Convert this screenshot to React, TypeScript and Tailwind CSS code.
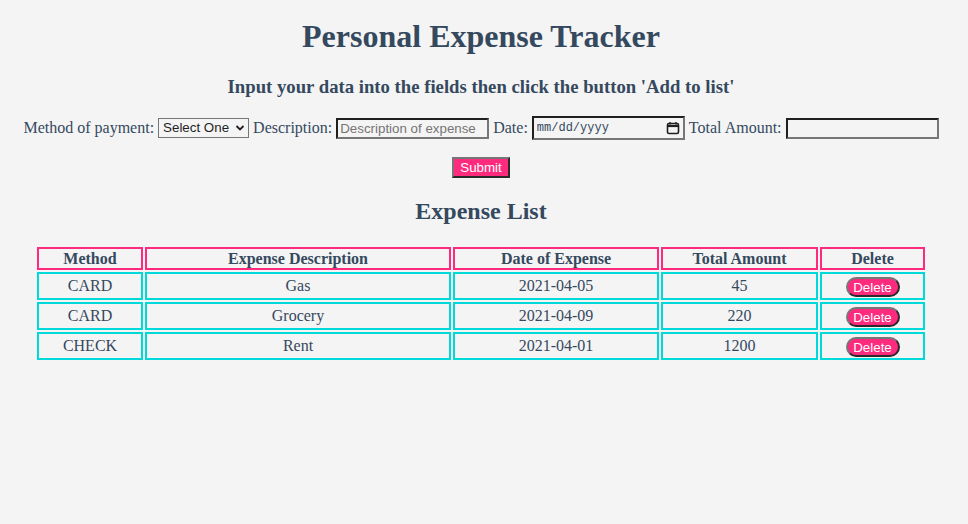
import { useState } from 'react'

interface Expense {
  id: number
  method: string
  description: string
  date: string
  amount: number
}

const initial: Expense[] = [
  { id: 1, method: 'CARD', description: 'Gas', date: '2021-04-05', amount: 45 },
  { id: 2, method: 'CARD', description: 'Grocery', date: '2021-04-09', amount: 220 },
  { id: 3, method: 'CHECK', description: 'Rent', date: '2021-04-01', amount: 1200 },
]

export default function App() {
  const [expenses, setExpenses] = useState<Expense[]>(initial)
  const [method, setMethod] = useState('')
  const [description, setDescription] = useState('')
  const [date, setDate] = useState('')
  const [amount, setAmount] = useState('')

  function handleSubmit(e: React.FormEvent) {
    e.preventDefault()
    if (!method || !description || !date || !amount) return
    setExpenses([
      ...expenses,
      { id: Date.now(), method, description, date, amount: Number(amount) },
    ])
    setDescription('')
    setDate('')
    setAmount('')
  }

  return (
    <div className="min-h-[524px] w-full bg-[#f4f4f4] font-['Liberation_Serif',serif] text-[16px] text-[#34495e]">
      <div className="w-[962px] pt-[18px]">
        {/* Header */}
        <h1 className="text-center text-[32px] font-bold leading-[37px]">
          Personal Expense Tracker
        </h1>
        <h3 className="mt-[21px] text-center text-[18.72px] font-bold leading-[22px]">
          Input your data into the fields then click the button 'Add to list'
        </h3>

        {/* Form */}
        <form onSubmit={handleSubmit} className="mt-[18px]">
          <div className="flex items-center justify-center gap-[4px] leading-[18px]">
            <label htmlFor="method">Method of payment:</label>
            <div className="relative">
              <select
                id="method"
                value={method}
                onChange={(e) => setMethod(e.target.value)}
                className="h-[20px] w-[91px] appearance-none rounded-none border border-[#767676] bg-[#f4f4f4] pl-[4px] font-['Liberation_Sans',sans-serif] text-[13.33px] text-[#1f1f1f] outline-none"
              >
                <option value="">Select One</option>
                <option value="CARD">CARD</option>
                <option value="CHECK">CHECK</option>
                <option value="CASH">CASH</option>
              </select>
              <svg
                className="pointer-events-none absolute right-[4px] top-[6px] h-[8px] w-[10px]"
                viewBox="0 0 10 8"
                fill="none"
                stroke="#1f1f1f"
                strokeWidth={1.8}
              >
                <path d="M1.5 2l3.5 3.5L8.5 2" />
              </svg>
            </div>
            <label htmlFor="description">Description:</label>
            <input
              id="description"
              type="text"
              value={description}
              onChange={(e) => setDescription(e.target.value)}
              placeholder="Description of expense"
              className="h-[21px] w-[153px] border-2 border-t-[#1f1f1f] border-l-[#1f1f1f] border-b-[#767676] border-r-[#767676] bg-[#f4f4f4] px-[2px] font-['Liberation_Sans',sans-serif] text-[13.33px] text-[#1f1f1f] outline-none placeholder:text-[#757575]"
            />
            <label htmlFor="date">Date:</label>
            <div className="flex h-[24px] w-[153px] items-center justify-between border-2 border-t-[#1f1f1f] border-l-[#1f1f1f] border-b-[#767676] border-r-[#767676] bg-[#f4f4f4] pl-[3px] pr-[3px]">
              <input
                id="date"
                type="text"
                value={date}
                onChange={(e) => setDate(e.target.value)}
                placeholder="mm/dd/yyyy"
                className="w-[110px] bg-transparent font-['Liberation_Mono',monospace] text-[12px] text-[#34495e] outline-none placeholder:text-[#34495e]"
              />
              <svg className="h-[14px] w-[14px]" viewBox="0 0 14 14" fill="none" stroke="#1f1f1f">
                <rect x="1.5" y="2.5" width="11" height="10" rx="1.5" strokeWidth={1.6} />
                <path d="M1.5 5h11" strokeWidth={2.2} />
                <path d="M4 1v2.5M10 1v2.5" strokeWidth={1.4} />
              </svg>
            </div>
            <label htmlFor="amount">Total Amount:</label>
            <input
              id="amount"
              type="text"
              value={amount}
              onChange={(e) => setAmount(e.target.value)}
              className="h-[21px] w-[153px] border-2 border-t-[#1f1f1f] border-l-[#1f1f1f] border-b-[#767676] border-r-[#767676] bg-[#f4f4f4] px-[2px] font-['Liberation_Sans',sans-serif] text-[13.33px] outline-none"
            />
          </div>
          <div className="mt-[17px] flex justify-center">
            <button
              type="submit"
              className="h-[21px] w-[58px] border-2 border-t-[#767676] border-l-[#767676] border-b-[#2a2a2a] border-r-[#2a2a2a] bg-[#fe2a7e] font-['Liberation_Sans',sans-serif] text-[13.33px] leading-none text-white"
            >
              Submit
            </button>
          </div>
        </form>

        {/* Expense list */}
        <h2 className="mt-[19px] text-center text-[24px] font-bold leading-[28px]">
          Expense List
        </h2>

        <table className="mx-auto mt-[20px] w-[892px] border-separate border-spacing-[2px] text-center">
          <thead>
            <tr className="h-[23px]">
              <th className="w-[106px] border-2 border-[#fe2a7e] font-bold leading-[19px]">Method</th>
              <th className="w-[306px] border-2 border-[#fe2a7e] font-bold leading-[19px]">Expense Description</th>
              <th className="w-[206px] border-2 border-[#fe2a7e] font-bold leading-[19px]">Date of Expense</th>
              <th className="w-[157px] border-2 border-[#fe2a7e] font-bold leading-[19px]">Total Amount</th>
              <th className="w-[105px] border-2 border-[#fe2a7e] font-bold leading-[19px]">Delete</th>
            </tr>
          </thead>
          <tbody>
            {expenses.map((exp) => (
              <tr key={exp.id} className="h-[27px]">
                <td className="border-2 border-[#00d9d9]">{exp.method}</td>
                <td className="border-2 border-[#00d9d9]">{exp.description}</td>
                <td className="border-2 border-[#00d9d9]">{exp.date}</td>
                <td className="border-2 border-[#00d9d9]">{exp.amount}</td>
                <td className="border-2 border-[#00d9d9]">
                  <button
                    type="button"
                    onClick={() => setExpenses(expenses.filter((x) => x.id !== exp.id))}
                    className="h-[20px] w-[54px] rounded-full border-2 border-t-[#767676] border-l-[#767676] border-b-[#2a2a2a] border-r-[#2a2a2a] bg-[#fe2a7e] font-['Liberation_Sans',sans-serif] text-[13.33px] leading-none text-white align-middle"
                  >
                    Delete
                  </button>
                </td>
              </tr>
            ))}
          </tbody>
        </table>
      </div>
    </div>
  )
}
